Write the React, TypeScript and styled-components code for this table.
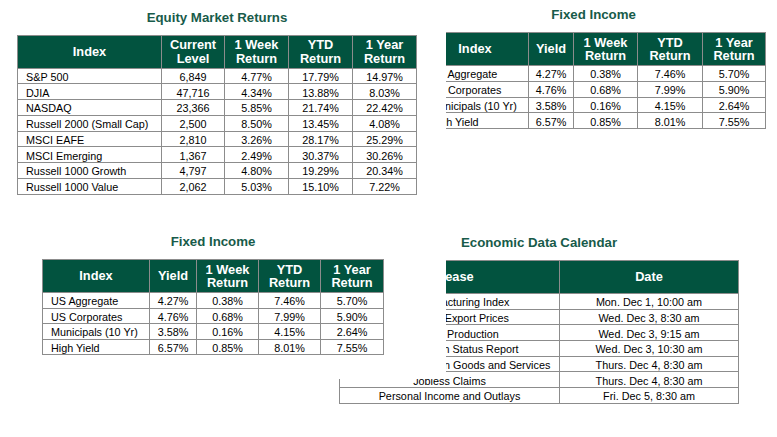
import { createGlobalStyle, styled } from "styled-components";

const GlobalStyle = createGlobalStyle`
  html, body {
    margin: 0;
    padding: 0;
    background: #fff;
  }
  body {
    font-family: "Liberation Sans", Arial, sans-serif;
    color: #000;
  }
`;

const Page = styled.main`
  width: 777px;
  height: 437px;
  display: grid;
  grid-template-columns: 339px 107px 331px;
  grid-template-rows: 225px 212px;
  overflow: hidden;
  background: #fff;
`;

// each report is a pasted picture: the left ones have a white ground that
// hides part of the right ones
const Panel = styled.section<{
  $col: string;
  $row: number;
  $pad: string;
  $front?: boolean;
  $height?: number;
}>`
  grid-column: ${(p) => p.$col};
  grid-row: ${(p) => p.$row};
  padding: ${(p) => p.$pad};
  height: ${(p) => (p.$height ? `${p.$height}px` : "auto")};
  align-self: start;
  box-sizing: border-box;
  display: flex;
  align-items: flex-start;
  background: ${(p) => (p.$front ? "#fff" : "transparent")};
  z-index: ${(p) => (p.$front ? 1 : 0)};
`;

const Card = styled.div`
  display: flex;
  flex-direction: column;
  align-items: center;
`;

const Title = styled.h2<{ $gap: number }>`
  margin: 0 0 ${(p) => p.$gap}px;
  font-size: 13.25px;
  line-height: 16px;
  font-weight: bold;
  color: #185b4a;
`;

const Table = styled.table<{ $width: number }>`
  width: ${(p) => p.$width}px;
  border-collapse: collapse;
  table-layout: fixed;
  border: 1px solid #8c8c8c;
`;

const Row = styled.tr<{ $h: number }>`
  height: ${(p) => p.$h}px;
`;

const Head = styled.th`
  background: #02533f;
  color: #fff;
  font-size: 12.8px;
  line-height: 13.5px;
  font-weight: bold;
  padding: 0 2px;
  border: 1px solid #8c8c8c;
  text-align: center;
  vertical-align: middle;
`;

const Cell = styled.td<{ $left?: boolean }>`
  font-size: 10.8px;
  line-height: 12px;
  padding: 2px ${(p) => (p.$left ? "8px" : "2px")} 0;
  border: 1px solid #8c8c8c;
  text-align: ${(p) => (p.$left ? "left" : "center")};
  vertical-align: middle;
  white-space: nowrap;
  overflow: hidden;
`;

type Report = {
  title: string;
  gap: number;
  width: number;
  cols: number[];
  head: string[][];
  rows: string[][];
  rowH: number;
  leftFirst: boolean;
};

function ReportTable({ r }: { r: Report }) {
  return (
    <Card>
      <Title $gap={r.gap}>{r.title}</Title>
      <Table $width={r.width}>
        <colgroup>
          {r.cols.map((w, i) => (
            <col key={i} style={{ width: w }} />
          ))}
        </colgroup>
        <thead>
          <Row $h={33}>
            {r.head.map((h, i) => (
              <Head key={i}>
                {h.map((line, j) => (
                  <div key={j}>{line}</div>
                ))}
              </Head>
            ))}
          </Row>
        </thead>
        <tbody>
          {r.rows.map((row, i) => (
            <Row $h={r.rowH} key={i}>
              {row.map((c, j) => (
                <Cell key={j} $left={r.leftFirst && j === 0}>
                  {c}
                </Cell>
              ))}
            </Row>
          ))}
        </tbody>
      </Table>
    </Card>
  );
}

const returnsHead = [["1 Week", "Return"], ["YTD", "Return"], ["1 Year", "Return"]];

const equity: Report = {
  title: "Equity Market Returns",
  gap: 9,
  width: 399,
  cols: [144, 63, 64, 64, 64],
  head: [["Index"], ["Current", "Level"], ...returnsHead],
  rowH: 15.75,
  leftFirst: true,
  rows: [
    ["S&P 500", "6,849", "4.77%", "17.79%", "14.97%"],
    ["DJIA", "47,716", "4.34%", "13.88%", "8.03%"],
    ["NASDAQ", "23,366", "5.85%", "21.74%", "22.42%"],
    ["Russell 2000 (Small Cap)", "2,500", "8.50%", "13.45%", "4.08%"],
    ["MSCI EAFE", "2,810", "3.26%", "28.17%", "25.29%"],
    ["MSCI Emerging", "1,367", "2.49%", "30.37%", "30.26%"],
    ["Russell 1000 Growth", "4,797", "4.80%", "19.29%", "20.34%"],
    ["Russell 1000 Value", "2,062", "5.03%", "15.10%", "7.22%"],
  ],
};

const fixedRows = [
  ["US Aggregate", "4.27%", "0.38%", "7.46%", "5.70%"],
  ["US Corporates", "4.76%", "0.68%", "7.99%", "5.90%"],
  ["Municipals (10 Yr)", "3.58%", "0.16%", "4.15%", "2.64%"],
  ["High Yield", "6.57%", "0.85%", "8.01%", "7.55%"],
];

const fixedTop: Report = {
  title: "Fixed Income",
  gap: 9,
  width: 344,
  cols: [107, 45, 64, 65, 63],
  head: [["Index"], ["Yield"], ...returnsHead],
  rowH: 15.75,
  leftFirst: true,
  rows: fixedRows,
};

const fixedBottom: Report = {
  ...fixedTop,
  gap: 9.5,
  width: 341,
  cols: [107, 47, 62, 62, 63],
  rowH: 15.5,
};

const calendar: Report = {
  title: "Economic Data Calendar",
  gap: 9,
  width: 399,
  cols: [220, 179],
  head: [["Release"], ["Date"]],
  rowH: 15.7,
  leftFirst: false,
  rows: [
    ["ISM Manufacturing Index", "Mon. Dec 1, 10:00 am"],
    ["Import and Export Prices", "Wed. Dec 3, 8:30 am"],
    ["Industrial Production", "Wed. Dec 3, 9:15 am"],
    ["EIA Petroleum Status Report", "Wed. Dec 3, 10:30 am"],
    ["International Trade in Goods and Services", "Thurs. Dec 4, 8:30 am"],
    ["Jobless Claims", "Thurs. Dec 4, 8:30 am"],
    ["Personal Income and Outlays", "Fri. Dec 5, 8:30 am"],
  ],
};

export default function App() {
  return (
    <>
      <GlobalStyle />
      <Page>
        <Panel $col="1 / 3" $row={1} $pad="9.5px 0 0 17px" $height={225} $front>
          <ReportTable r={equity} />
        </Panel>
        <Panel $col="2 / 4" $row={1} $pad="7px 0 0 82px">
          <ReportTable r={fixedTop} />
        </Panel>
        <Panel $col="1 / 3" $row={2} $pad="8.5px 0 0 42px" $height={154} $front>
          <ReportTable r={fixedBottom} />
        </Panel>
        <Panel $col="2 / 4" $row={2} $pad="10px 0 0 0">
          <ReportTable r={calendar} />
        </Panel>
      </Page>
    </>
  );
}
